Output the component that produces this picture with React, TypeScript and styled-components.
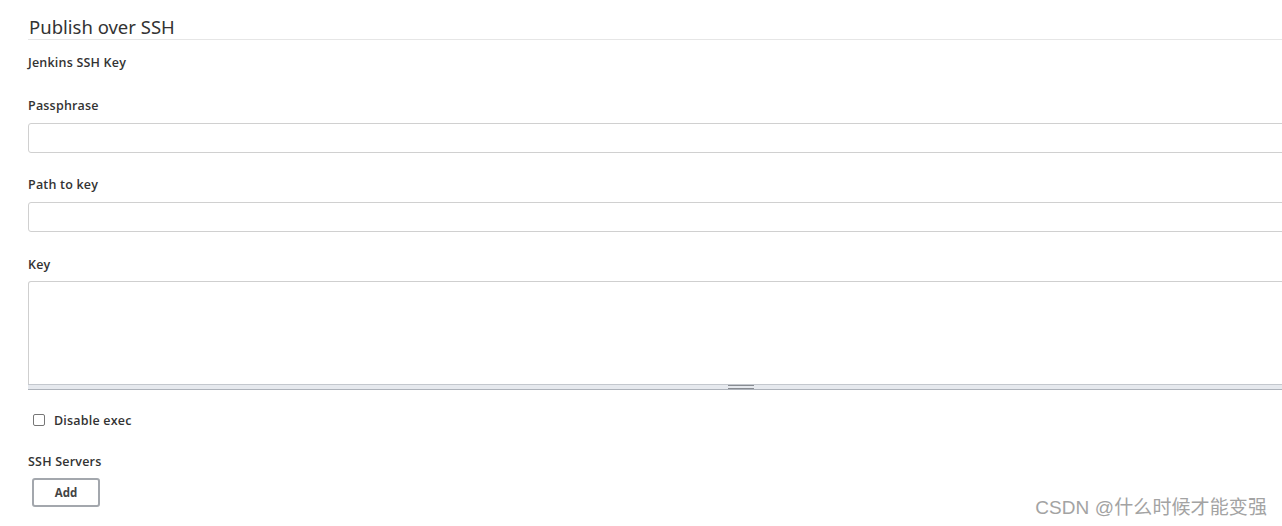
import React from 'react';
import styled, { createGlobalStyle } from 'styled-components';

const GlobalStyle = createGlobalStyle`
  html, body {
    margin: 0;
    padding: 0;
    background: #ffffff;
    overflow: hidden;
  }
  body {
    font-family: 'Open Sans', 'Noto Sans', sans-serif;
    color: #333333;
  }
`;

const Page = styled.div`
  position: relative;
  width: 1282px;
  height: 526px;
  overflow: hidden;
  padding-left: 28px;
  box-sizing: border-box;
`;

// the form is wider than the window, its right side is cut off
const Section = styled.div`
  width: 1426px;
`;

const Title = styled.h2`
  margin: 15px 0 0;
  padding-left: 1px;
  font-family: 'Noto Sans', sans-serif;
  font-size: 18.5px;
  font-weight: 400;
  line-height: 24px;
  color: #333333;
  border-bottom: 1px solid #e6e6e6;
`;

const Label = styled.div<{ $top: number }>`
  margin-top: ${(p) => p.$top}px;
  margin-bottom: -1px;
  padding-top: 1px;
  font-size: 12.5px;
  font-weight: 600;
  letter-spacing: 0.2px;
  line-height: 16px;
  color: #333333;
`;

const TextInput = styled.input`
  display: block;
  box-sizing: border-box;
  width: 100%;
  height: 30px;
  margin-top: 10px;
  border: 1px solid #d0d0d0;
  border-radius: 3px;
  background: #ffffff;
  outline: none;
`;

const TextAreaWrap = styled.div`
  margin-top: 9px;
`;

const TextArea = styled.textarea`
  display: block;
  box-sizing: border-box;
  width: 100%;
  height: 103px;
  margin: 0;
  border: 1px solid #cfcfcf;
  border-bottom: none;
  border-radius: 3px 0 0 0;
  resize: none;
  outline: none;
`;

const ResizeBar = styled.div`
  height: 6px;
  box-sizing: border-box;
  background: #e6e9ee;
  border-top: 1px solid #c4c8ce;
  border-bottom: 1px solid #aeb3bb;
  display: flex;
  justify-content: center;
  align-items: center;
`;

const Grip = styled.div`
  width: 26px;
  height: 4px;
  border-top: 1px solid #888c92;
  border-bottom: 1px solid #888c92;
  box-sizing: border-box;
`;

const CheckRow = styled.label`
  display: flex;
  align-items: center;
  margin-top: 22px;
  padding-left: 5px;
  height: 16px;
  font-size: 12.5px;
  font-weight: 600;
  letter-spacing: 0.2px;
  color: #333333;
`;

const Box = styled.span`
  width: 12px;
  height: 12px;
  box-sizing: border-box;
  border: 1px solid #767676;
  border-radius: 2px;
  background: #ffffff;
  margin-right: 9px;
`;

const AddButton = styled.button`
  display: block;
  margin: 9px 0 0 4px;
  width: 68px;
  height: 29px;
  box-sizing: border-box;
  border: 2px solid #a3a7ad;
  border-radius: 3px;
  background: #ffffff;
  font-family: 'Open Sans', 'Noto Sans', sans-serif;
  font-size: 11.5px;
  font-weight: 700;
  color: #444444;
  padding: 0;
`;

const Watermark = styled.div`
  position: absolute;
  right: 15px;
  bottom: 6px;
  font-family: 'Liberation Sans', 'Noto Sans CJK SC', sans-serif;
  font-size: 19px;
  line-height: 24px;
  letter-spacing: 0.1px;
  color: #a3a3a3;
`;

const App: React.FC = () => {
  return (
    <Page>
      <GlobalStyle />
      <Section>
        <Title>Publish over SSH</Title>
        <Label $top={14}>Jenkins SSH Key</Label>
        <Label $top={27}>Passphrase</Label>
        <TextInput type="password" />
        <Label $top={23}>Path to key</Label>
        <TextInput type="text" />
        <Label $top={24}>Key</Label>
        <TextAreaWrap>
          <TextArea />
          <ResizeBar>
            <Grip />
          </ResizeBar>
        </TextAreaWrap>
        <CheckRow>
          <Box />
          Disable exec
        </CheckRow>
        <Label $top={25}>SSH Servers</Label>
        <AddButton>Add</AddButton>
      </Section>
      <Watermark>CSDN @什么时候才能变强</Watermark>
    </Page>
  );
};

export default App;
